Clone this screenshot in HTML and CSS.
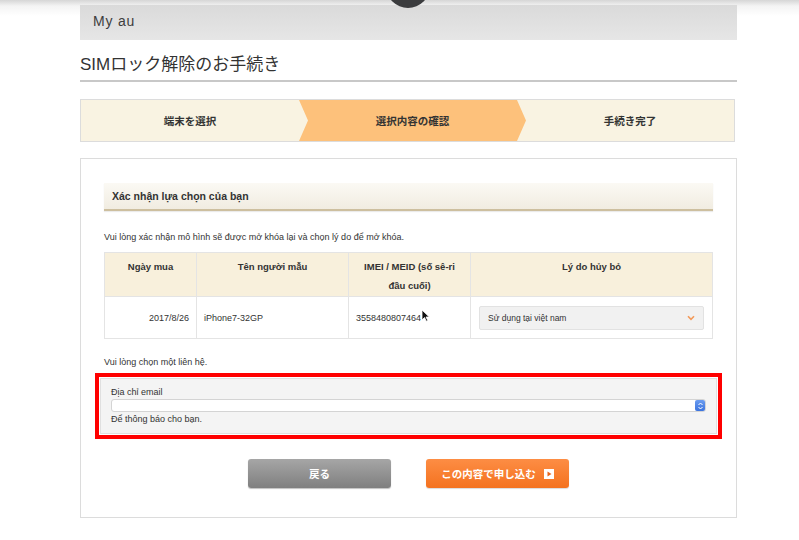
FILE: index.html
```html
<!DOCTYPE html>
<html lang="ja">
<head>
    <meta charset="UTF-8">
    <meta name="viewport" content="width=device-width, initial-scale=1.0">
    <title>SIMロック解除のお手続き | My au</title>
    <link rel="stylesheet" href="styles.css">
</head>
<body>
    <div class="camera-dot"></div>

    <div class="page">
        <div class="myau-bar">My au</div>
        <h1 class="page-title">SIMロック解除のお手続き</h1>

        <ol class="steps">
            <li class="step">端末を選択</li>
            <li class="step step-current">選択内容の確認</li>
            <li class="step">手続き完了</li>
        </ol>

        <div class="panel">
            <h2 class="section-head">Xác nhận lựa chọn của bạn</h2>
            <p class="note">Vui lòng xác nhận mô hình sẽ được mở khóa lại và chọn lý do để mở khóa.</p>

            <table class="confirm-table">
                <colgroup>
                    <col class="col-date">
                    <col class="col-model">
                    <col class="col-imei">
                    <col>
                </colgroup>
                <thead>
                    <tr>
                        <th>Ngày mua</th>
                        <th>Tên người mẫu</th>
                        <th>IMEI / MEID (số sê-ri đầu cuối)</th>
                        <th>Lý do hủy bỏ</th>
                    </tr>
                </thead>
                <tbody>
                    <tr>
                        <td class="cell-date">2017/8/26</td>
                        <td>iPhone7-32GP</td>
                        <td class="cell-imei">3558480807464<span class="cursor"><svg width="9" height="13" viewBox="0 0 9 13"><path d="M1 1 L1 11 L3.5 8.5 L5.3 12.2 L6.8 11.5 L5 8 L8.3 8 Z" fill="#111" stroke="#fff" stroke-width="0.8"/></svg></span></td>
                        <td class="cell-reason">
                            <div class="reason-select">
                                <span>Sử dụng tại việt nam</span>
                                <svg width="8" height="6" viewBox="0 0 8 6"><path d="M1 1.2 L4 4.3 L7 1.2" fill="none" stroke="#f39a5a" stroke-width="1.6"/></svg>
                            </div>
                        </td>
                    </tr>
                </tbody>
            </table>

            <p class="note note-contact">Vui lòng chọn một liên hệ.</p>

            <div class="highlight">
                <div class="contact-box">
                    <label class="contact-label">Địa chỉ email</label>
                    <div class="email-select">
                        <span class="stepper"><svg width="5" height="8" viewBox="0 0 5 8"><path d="M0.5 3 L2.5 1 L4.5 3 M0.5 5 L2.5 7 L4.5 5" fill="none" stroke="#fff" stroke-width="1"/></svg></span>
                    </div>
                    <p class="contact-hint">Để thông báo cho bạn.</p>
                </div>
            </div>

            <div class="actions">
                <button class="btn btn-back">戻る</button>
                <button class="btn btn-submit">この内容で申し込む <span class="btn-icon"><svg width="10" height="10" viewBox="0 0 10 10"><rect width="10" height="10" fill="#fff"/><path d="M3.5 2.5 L7.5 5 L3.5 7.5 Z" fill="#e8651d"/></svg></span></button>
            </div>
        </div>
    </div>
</body>
</html>
```

FILE: styles.css
```css
body {
    margin: 0;
    padding: 0;
    font-family: 'Liberation Sans', Arial, 'Noto Sans CJK JP', sans-serif;
    color: #333;
    background: linear-gradient(#d6d6d6 0, #f4f4f4 6px, #fff 16px) no-repeat;
    background-color: #fff;
}
.camera-dot {
    position: absolute;
    left: 386px;
    top: -36px;
    width: 44px;
    height: 44px;
    border-radius: 50%;
    background-color: #3b3c3e;
}
.page {
    width: 657px;
    margin-left: 80px;
    padding-top: 5px;
}
.myau-bar {
    height: 35px;
    line-height: 33px;
    padding-left: 13px;
    font-size: 14px;
    letter-spacing: 0.8px;
    color: #3d3d3d;
    background: linear-gradient(#dadada, #e6e6e6);
}
.page-title {
    margin: 14px 0 0;
    padding-bottom: 4px;
    font-size: 17px;
    line-height: 22px;
    font-weight: normal;
    color: #333;
    border-bottom: 2px solid #c8c8c8;
}
.steps {
    display: flex;
    height: 41px;
    margin: 17px 2px 0 0;
    padding: 0;
    list-style: none;
    border: 1px solid #dcdcdc;
    background-color: #f9f3e2;
    font-family: 'Noto Sans CJK JP', sans-serif;
    font-size: 10.5px;
    font-weight: bold;
}
.step {
    display: flex;
    align-items: center;
    justify-content: center;
    width: 218px;
}
.step:last-child {
    flex: 1;
}
.step-current {
    width: 227px;
    background-color: #fdc17b;
    clip-path: polygon(0 0, calc(100% - 9px) 0, 100% 50%, calc(100% - 9px) 100%, 0 100%, 9px 50%);
}
.panel {
    margin-top: 16px;
    padding: 24px 23px 29px;
    border: 1px solid #dcdcdc;
}
.section-head {
    margin: 0;
    height: 26px;
    line-height: 27px;
    padding-left: 8px;
    font-size: 10.5px;
    background: linear-gradient(#fbf9f4, #f1ece1);
    border-bottom: 2px solid #cdbf9f;
    box-shadow: 0 1px 1px rgba(0,0,0,0.08);
}
.note {
    margin: 19px 0 0;
    font-size: 9px;
    line-height: 14px;
}
.confirm-table {
    width: 100%;
    margin-top: 8px;
    border-collapse: collapse;
    font-size: 9px;
}
.col-date {
    width: 92px;
}
.col-model {
    width: 152px;
}
.col-imei {
    width: 122px;
}
.confirm-table th,
.confirm-table td {
    border: 1px solid #e4e4e4;
}
.confirm-table th {
    height: 38px;
    padding: 4px 12px 1px;
    vertical-align: top;
    font-size: 9.5px;
    line-height: 19px;
    background-color: #f8f0dc;
}
.confirm-table td {
    height: 41px;
    padding: 0 7px;
}
.cell-date {
    text-align: right;
}
.cell-imei {
    position: relative;
}
.cursor {
    position: absolute;
    left: 72px;
    top: 12px;
}
.confirm-table td.cell-reason {
    padding: 0 8px;
}
.reason-select {
    display: flex;
    align-items: center;
    justify-content: space-between;
    height: 22px;
    padding: 0 8px;
    font-size: 8.5px;
    background-color: #f1f1f1;
    border: 1px solid #e2e2e2;
    border-radius: 2px;
}
.note-contact {
    margin-top: 16px;
}
.highlight {
    margin: 4px -9px 0;
    border: 4px solid #f00;
    padding: 1px;
}
.contact-box {
    padding: 6px 10px 7px;
    background-color: #f4f4f4;
    border: 1px solid #e0e0e0;
    font-size: 9px;
}
.contact-label {
    display: block;
    line-height: 14px;
}
.email-select {
    display: flex;
    justify-content: flex-end;
    height: 11px;
    background-color: #fff;
    border: 1px solid #d4d4d4;
    border-radius: 3px;
}
.stepper {
    display: flex;
    align-items: center;
    justify-content: center;
    width: 10px;
    background: linear-gradient(#6a9bf0, #3c74de);
    border-radius: 2px;
}
.contact-hint {
    margin: 0;
    line-height: 14px;
}
.actions {
    display: flex;
    justify-content: center;
    gap: 35px;
    margin-top: 20px;
}
.btn {
    width: 143px;
    height: 29px;
    border: none;
    border-radius: 3px;
    color: white;
    font-family: 'Noto Sans CJK JP', sans-serif;
    font-size: 10.5px;
    font-weight: bold;
    cursor: pointer;
}
.btn-back {
    background: linear-gradient(#a6a6a6, #7f7f7f);
    box-shadow: 0 1px 1px rgba(0,0,0,0.25);
}
.btn-submit {
    display: flex;
    align-items: center;
    justify-content: center;
    gap: 8px;
    background: linear-gradient(#fd8d44, #f4721f);
    box-shadow: 0 1px 1px rgba(0,0,0,0.15);
}
.btn-icon {
    display: flex;
}
```
